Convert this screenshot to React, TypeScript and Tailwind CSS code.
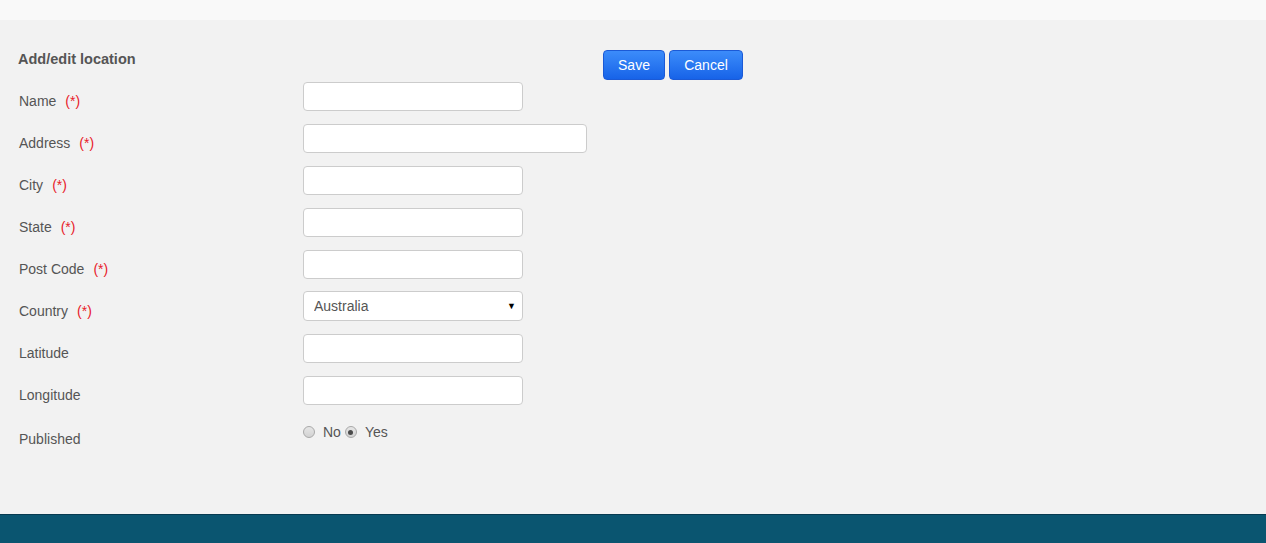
import React from "react";

type Field = {
  label: string;
  required?: boolean;
  width?: string;
  kind?: "text" | "select";
};

const fields: Field[] = [
  { label: "Name", required: true },
  { label: "Address", required: true, width: "w-[284px]" },
  { label: "City", required: true },
  { label: "State", required: true },
  { label: "Post Code", required: true },
  { label: "Country", required: true, kind: "select" },
  { label: "Latitude" },
  { label: "Longitude" },
];

const font = { fontFamily: '"Liberation Sans", Arial, sans-serif' };

const Radio = ({ checked, onClick }: { checked: boolean; onClick: () => void }) => (
  <span
    role="radio"
    aria-checked={checked}
    onClick={onClick}
    className="flex items-center justify-center w-[12px] h-[12px] rounded-full border border-[#a9a9a9] bg-gradient-to-b from-[#e6e6e6] to-[#d2d2d2] cursor-pointer"
  >
    {checked && <span className="w-[5px] h-[5px] rounded-full bg-[#4a4a4a]" />}
  </span>
);

export default function App() {
  const [published, setPublished] = React.useState("yes");

  return (
    <div className="w-[1266px] h-[543px] flex flex-col bg-[#f2f2f2] text-[#555]" style={font}>
      {/* top bar */}
      <div className="h-[20px] bg-[#f9f9f9]" />

      {/* form */}
      <div className="h-[494px] px-[18px] pt-[29px]">
        <div className="flex items-start">
          <div className="w-[585px] h-[20px] leading-[20px] text-[14.5px] font-bold text-[#555]">
            Add/edit location
          </div>
          <div className="flex gap-[4px] mt-[1px]">
            <button className="h-[30px] w-[62px] rounded-[4px] border border-[#1b5ad6] bg-gradient-to-b from-[#3c8cfa] to-[#1763e8] text-white text-[14px] leading-[28px]">
              Save
            </button>
            <button className="h-[30px] w-[74px] rounded-[4px] border border-[#1b5ad6] bg-gradient-to-b from-[#3c8cfa] to-[#1763e8] text-white text-[14px] leading-[28px]">
              Cancel
            </button>
          </div>
        </div>

        <div className="mt-[2px] flex flex-col">
          {fields.map((f) => (
            <div key={f.label} className="flex h-[42px]">
              <div className="w-[285px] pt-[9px] pl-[1px] text-[14px] leading-[20px] text-[#555]">
                {f.label}
                {f.required && <span className="ml-[9px] text-[#e8202a]">(*)</span>}
              </div>
              {f.kind === "select" ? (
                <div className="relative -mt-[1px] w-[220px] h-[30px] rounded-[4px] border border-[#cccccc] bg-white">
                  <select
                    className="appearance-none w-full h-full bg-transparent pl-[10px] text-[14px] text-[#555] outline-none"
                    style={font}
                    defaultValue="Australia"
                  >
                    <option>Australia</option>
                    <option>New Zealand</option>
                  </select>
                  <span className="pointer-events-none absolute right-[6px] top-[8px] text-[9px] leading-[12px] text-black">
                    ▼
                  </span>
                </div>
              ) : (
                <input
                  type="text"
                  className={`${f.width ?? "w-[220px]"} h-[29px] rounded-[4px] border border-[#cccccc] bg-white px-[10px] text-[14px] outline-none`}
                />
              )}
            </div>
          ))}

          <div className="flex h-[42px]">
            <div className="w-[285px] pt-[11px] pl-[1px] text-[14px] leading-[20px] text-[#555]">
              Published
            </div>
            <div className="flex items-center h-[28px] text-[14px] text-[#555]">
              <label className="flex items-center">
                <Radio checked={published === "no"} onClick={() => setPublished("no")} />
                <span className="ml-[8px]">No</span>
              </label>
              <label className="flex items-center ml-[4px]">
                <Radio checked={published === "yes"} onClick={() => setPublished("yes")} />
                <span className="ml-[8px]">Yes</span>
              </label>
            </div>
          </div>
        </div>
      </div>

      {/* footer */}
      <div className="flex-1 border-t border-[#073a50] bg-[#0a5570]" />
    </div>
  );
}
